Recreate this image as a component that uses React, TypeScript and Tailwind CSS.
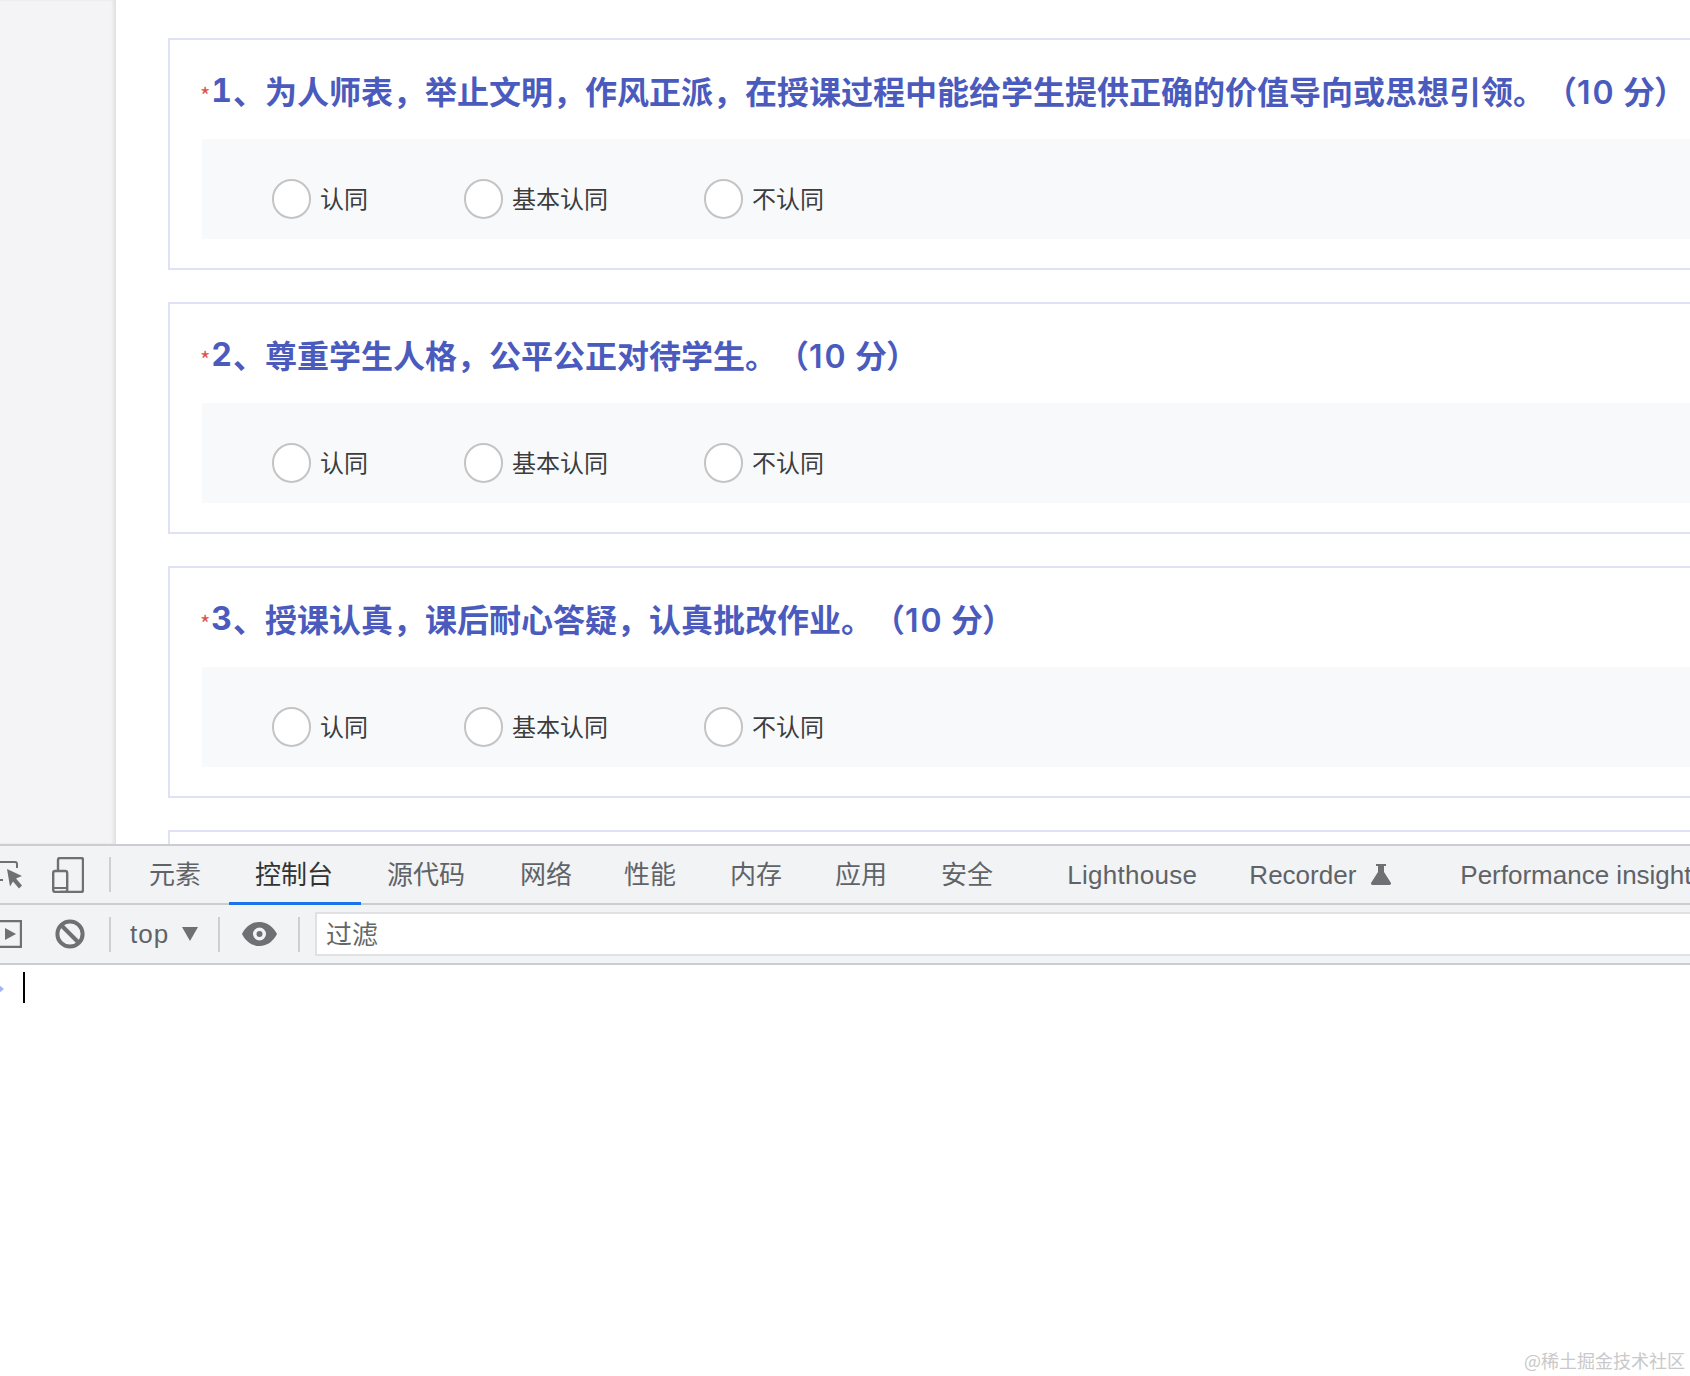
const questions = [
  { no: "1", text: "、为人师表，举止文明，作风正派，在授课过程中能给学生提供正确的价值导向或思想引领。" },
  { no: "2", text: "、尊重学生人格，公平公正对待学生。" },
  { no: "3", text: "、授课认真，课后耐心答疑，认真批改作业。" },
];

const options = ["认同", "基本认同", "不认同"];

function Card({ no, text }: { no: string; text: string }) {
  return (
    <div className="mb-[32px] h-[232px] w-[1600px] shrink-0 border-2 border-[#dfe1f6] pl-[32px] pt-[20px]">
      <div className="flex h-[62px] items-center text-[32px] leading-[42px] font-bold whitespace-nowrap text-[#4a5bbd] [text-spacing-trim:space-all]">
        <span className="mt-[6px] ml-[-2px] h-[24px] w-[10px] text-[22px] leading-[24px] font-normal text-[#d9534f]">*</span>
        {no && (
          <>
            <span className="w-[23px] text-center font-['Inter'] font-bold tabular-nums">{no}</span>
            <span>
              {text}
              <span className="tracking-[-2px]">（</span>
              <span className="ml-[2px] font-['Inter'] font-semibold tracking-[2px]">10</span>{" "}
              <span className="tracking-[-1px]">分</span>）
            </span>
          </>
        )}
      </div>
      <div className="mt-[17px] flex h-[100px] items-start bg-[#f8f9fb] pl-[70px] pt-[40px]">
        {options.map((o) => (
          <label key={o} className="mr-[96px] flex h-[40px] items-center">
            <span className="h-[40px] w-[39px] rounded-full border-2 border-[#c4c4c4] bg-white" />
            <span className="mt-[-3px] ml-[9px] text-[24px] leading-[32px] text-[#3c3c3c]">{o}</span>
          </label>
        ))}
      </div>
    </div>
  );
}

function Divider() {
  return <div className="h-[35px] w-[2px] shrink-0 bg-[#cdcfd2]" />;
}

function Tab({
  label,
  active,
  className,
}: {
  label: string;
  active?: boolean;
  className?: string;
}) {
  return (
    <div
      className={`flex h-[59px] shrink-0 items-center border-b-[3px] px-[26px] pt-[2px] whitespace-nowrap ${
        active ? "border-[#1a73e8] text-[#333333]" : "border-transparent"
      } ${className ?? ""}`}
    >
      {label}
    </div>
  );
}

export default function App() {
  return (
    <div className="relative flex h-[1376px] w-[1690px] flex-col overflow-hidden bg-white font-['Noto_Sans_CJK_SC',sans-serif]">
      <div className="flex h-[844px] shrink-0 overflow-hidden">
        <div className="w-[116px] shrink-0 bg-[#f4f4f6] shadow-[inset_-3px_0_3px_rgba(0,0,0,0.07)]" />
        <div className="flex-1 pl-[52px] pt-[38px]">
          {questions.map((q) => (
            <Card key={q.no} no={q.no} text={q.text} />
          ))}
          <Card no="" text="" />
        </div>
      </div>

      <div className="shrink-0 border-t-2 border-[#cbcdd1] bg-[#f1f3f4] font-['Liberation_Sans','Noto_Sans_CJK_SC',sans-serif] text-[26px] text-[#5f6368]">
        <div className="flex h-[59px] items-start border-b-2 border-[#cbcdd1]">
          <div className="flex h-[57px] shrink-0 items-center">
            <svg width="22" height="30" viewBox="0 0 22 30" className="shrink-0 text-[#6e7074]">
              <path d="M0 2h15a2 2 0 0 1 2 2v4" fill="none" stroke="currentColor" strokeWidth="2" />
              <path d="M0 20h3" fill="none" stroke="currentColor" strokeWidth="2" />
              <path d="M7 9l15 7-6 2.5 6 7-3 3-6-7-3 5z" fill="currentColor" />
            </svg>
            <svg width="32" height="36" viewBox="0 0 32 36" className="ml-[30px] shrink-0 text-[#6e7074]">
              <path d="M6 14V3a2 2 0 0 1 2-2h21a2 2 0 0 1 2 2v30a2 2 0 0 1-2 2H8" fill="none" stroke="currentColor" strokeWidth="2.4" />
              <rect x="1.2" y="14" width="14" height="21" rx="2" fill="none" stroke="currentColor" strokeWidth="2.4" />
              <path d="M1 31h15" stroke="currentColor" strokeWidth="2" />
            </svg>
            <div className="ml-[25px]">
              <Divider />
            </div>
          </div>
          <div className="ml-[12px] flex shrink-0">
            <Tab label="元素" />
            <Tab label="控制台" active className="ml-[2px] pr-[28px]" />
            <Tab label="源代码" />
            <Tab label="网络" className="ml-[3px]" />
            <Tab label="性能" />
            <Tab label="内存" className="ml-[2px]" />
            <Tab label="应用" className="ml-[1px]" />
            <Tab label="安全" className="ml-[2px]" />
            <Tab label="Lighthouse" className="ml-[22px] tracking-[0.3px]" />
            <div className="flex h-[57px] shrink-0 items-center px-[26px] pt-[2px]">
              Recorder
              <svg width="20" height="21" viewBox="0 0 20 21" className="mb-[3px] ml-[15px] shrink-0 text-[#6e7074]">
                <path d="M5 0h10v2h-2v6l7 11q.5 2-2 2H2q-2.500 0-2-2l7-11V2H5z" fill="currentColor" />
              </svg>
            </div>
            <Tab label="Performance insights" className="ml-[17px]" />
          </div>
        </div>

        <div className="flex h-[60px] items-center border-b-2 border-[#cbcdd1]">
          <svg width="22" height="28" viewBox="0 0 22 28" className="shrink-0 text-[#6e7074]">
            <path d="M0 1h21v26H0" fill="none" stroke="currentColor" strokeWidth="2.4" />
            <path d="M5 8l11 6-11 6z" fill="currentColor" />
          </svg>
          <svg width="30" height="30" viewBox="0 0 30 30" className="ml-[33px] shrink-0 text-[#6e7074]">
            <circle cx="15" cy="15" r="12.600" fill="none" stroke="currentColor" strokeWidth="4" />
            <path d="M6 6l18 18" stroke="currentColor" strokeWidth="4" />
          </svg>
          <div className="ml-[24px]">
            <Divider />
          </div>
          <span className="ml-[19px] w-[38px] tracking-[1px]">top</span>
          <svg width="16" height="14" viewBox="0 0 16 14" className="ml-[14px] shrink-0 text-[#6e7074]">
            <path d="M0 0h16l-8 14z" fill="currentColor" />
          </svg>
          <div className="ml-[20px]">
            <Divider />
          </div>
          <svg width="35" height="24" viewBox="0 0 35 24" className="ml-[22px] shrink-0 text-[#6e7074]">
            <path
              fillRule="evenodd"
              d="M17.500 0C9.500 0 3.500 5 0 12c3.500 7 9.500 12 17.500 12S31.500 19 35 12C31.500 5 25.500 0 17.500 0zm0 5.500a6.500 6.500 0 1 1 0 13 6.500 6.500 0 0 1 0-13zm0 3.500a3 3 0 1 0 0 6 3 3 0 0 0 0-6z"
              fill="currentColor"
            />
          </svg>
          <div className="ml-[21px]">
            <Divider />
          </div>
          <div className="ml-[15px] flex h-[44px] flex-1 items-center border-2 border-r-0 border-[#dfe1e3] bg-white pl-[9px] pt-[2px] text-[#666666]">
            过滤
          </div>
        </div>
      </div>

      <div className="flex flex-1 items-start pt-[7px]">
        <svg width="5" height="10" viewBox="0 0 5 10" className="mt-[12px] shrink-0 text-[#a3b4f5]">
          <path d="M-2 0l6 5-6 5z" fill="currentColor" />
        </svg>
        <div className="ml-[18px] h-[31px] w-[2px] bg-black" />
      </div>

      <div className="absolute right-[5px] bottom-[5px] text-[18px] leading-[22px] text-[#c9c9c9]">@稀土掘金技术社区</div>
    </div>
  );
}
